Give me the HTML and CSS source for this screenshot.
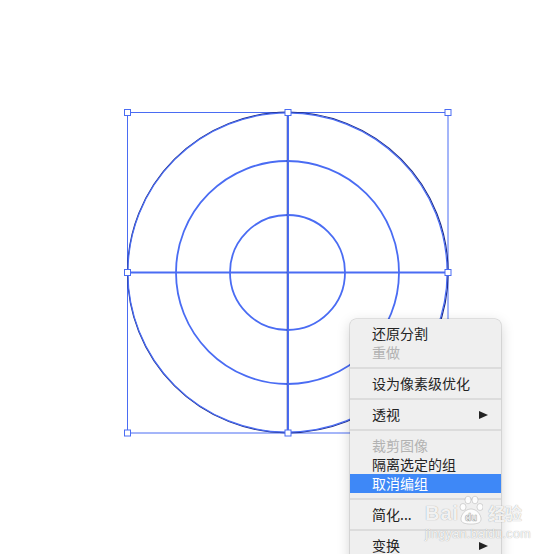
FILE: index.html
```html
<!DOCTYPE html>
<html>
<head>
<meta charset="utf-8">
<link rel="stylesheet" href="styles.css">
</head>
<body>
<div class="canvas">
  <svg class="art" width="555" height="554" viewBox="0 0 555 554">
    <rect x="127.5" y="112.5" width="320.5" height="320.5" fill="none" stroke="#4a6cf3" stroke-width="1"/>
    <circle cx="287.8" cy="272.5" r="160.3" fill="none" stroke="#1e2c86" stroke-width="1.2"/>
    <circle cx="287.5" cy="272.5" r="159.6" fill="none" stroke="#4a6cf3" stroke-width="1.2"/>
    <circle cx="287.5" cy="272.5" r="111.5" fill="none" stroke="#4a6cf3" stroke-width="1.8"/>
    <circle cx="287.5" cy="272.5" r="57.5" fill="none" stroke="#4a6cf3" stroke-width="1.8"/>
    <line x1="127.5" y1="272.5" x2="448" y2="272.5" stroke="#4a6cf3" stroke-width="2"/>
    <line x1="288" y1="112.5" x2="288" y2="433" stroke="#4a6cf3" stroke-width="2"/>
    <line x1="286.8" y1="112.5" x2="286.8" y2="433" stroke="#3a3f80" stroke-width="0.6" opacity="0.6"/>
    <g fill="#fff" stroke="#4a6cf3" stroke-width="1">
      <rect x="124.5" y="109.5" width="6" height="6"/>
      <rect x="285" y="109.5" width="6" height="6"/>
      <rect x="445" y="109.5" width="6" height="6"/>
      <rect x="124.5" y="269.5" width="6" height="6"/>
      <rect x="445" y="269.5" width="6" height="6"/>
      <rect x="124.5" y="430" width="6" height="6"/>
      <rect x="285" y="430" width="6" height="6"/>
      <rect x="445" y="430" width="6" height="6"/>
    </g>
  </svg>

  <div class="menu">
    <div class="item">还原分割</div>
    <div class="item disabled">重做</div>
    <div class="sep"></div>
    <div class="item">设为像素级优化</div>
    <div class="sep"></div>
    <div class="item">透视<span class="arrow"></span></div>
    <div class="sep"></div>
    <div class="item disabled">裁剪图像</div>
    <div class="item">隔离选定的组</div>
    <div class="item active">取消编组</div>
    <div class="sep"></div>
    <div class="item">简化...</div>
    <div class="sep"></div>
    <div class="item">变换<span class="arrow"></span></div>
  </div>

  <div class="watermark">
    <div class="wm-top">
      <span class="wm-bai">Bai</span>
      <svg class="wm-paw" width="24" height="30" viewBox="0 0 24 30">
        <g fill="rgba(255,255,255,0.85)" stroke="rgba(0,0,0,0.18)" stroke-width="0.8">
          <ellipse cx="4" cy="12" rx="3" ry="3.5"/>
          <ellipse cx="9" cy="5" rx="3" ry="3.8"/>
          <ellipse cx="16" cy="5" rx="3" ry="3.8"/>
          <ellipse cx="21" cy="12" rx="3" ry="3.5"/>
          <path d="M12 14 C6 14 2 20 2 24 C2 28 6 29 12 29 C18 29 22 28 22 24 C22 20 18 14 12 14 Z"/>
        </g>
        <text x="12" y="26" text-anchor="middle" class="wm-du">du</text>
      </svg>
      <span class="wm-jy">经验</span>
    </div>
    <div class="wm-url">jingyan.baidu.com</div>
  </div>
</div>
</body>
</html>
```

FILE: styles.css
```css
html, body {
  margin: 0;
  padding: 0;
  background: #ffffff;
  overflow: hidden;
}
.canvas {
  position: relative;
  width: 555px;
  height: 554px;
  overflow: hidden;
  font-family: "Noto Sans CJK SC", "Noto Sans", sans-serif;
}
.art {
  position: absolute;
  left: 0;
  top: 0;
}
.menu {
  position: absolute;
  left: 350px;
  top: 319px;
  width: 151px;
  height: 260px;
  background: #efefef;
  border-radius: 6px;
  box-shadow: 0 0 0 0.5px rgba(0,0,0,0.18), 0 4px 14px rgba(0,0,0,0.18);
  padding-top: 5px;
  box-sizing: border-box;
}
.item {
  height: 19px;
  line-height: 19px;
  padding-left: 22px;
  padding-right: 13px;
  font-size: 14px;
  color: #232323;
  display: flex;
  justify-content: space-between;
  align-items: center;
}
.item.disabled {
  color: #b2b2b2;
}
.item.active {
  background: #3e88f7;
  color: #ffffff;
}
.sep {
  height: 12px;
  display: flex;
  align-items: center;
}
.sep::before {
  content: "";
  display: block;
  width: 100%;
  height: 2px;
  background: #dcdcdc;
}
.arrow {
  width: 0;
  height: 0;
  border-top: 4.5px solid transparent;
  border-bottom: 4.5px solid transparent;
  border-left: 9px solid #222;
}
.watermark {
  position: absolute;
  left: 425px;
  top: 495px;
  color: rgba(255,255,255,0.9);
  text-shadow: 0 0 1px rgba(0,0,0,0.4);
  font-family: "Liberation Sans", sans-serif;
}
.wm-top {
  display: flex;
  align-items: flex-end;
  height: 30px;
}
.wm-bai {
  font-size: 20px;
  font-weight: bold;
  letter-spacing: 1px;
  line-height: 22px;
  padding-bottom: 1px;
}
.wm-paw {
  display: block;
  margin-left: 0px;
}
.wm-du {
  font-family: "Liberation Sans", sans-serif;
  font-size: 10px;
  font-weight: bold;
  fill: rgba(255,255,255,0.95);
  stroke: rgba(0,0,0,0.25);
  stroke-width: 0.4;
}
.wm-jy {
  font-family: "Noto Sans CJK SC", sans-serif;
  font-size: 17px;
  font-weight: bold;
  line-height: 22px;
  margin-left: 5px;
  padding-bottom: 1px;
}
.wm-url {
  font-size: 12.5px;
  line-height: 14px;
  margin-top: 2px;
  letter-spacing: 0.3px;
}
```
